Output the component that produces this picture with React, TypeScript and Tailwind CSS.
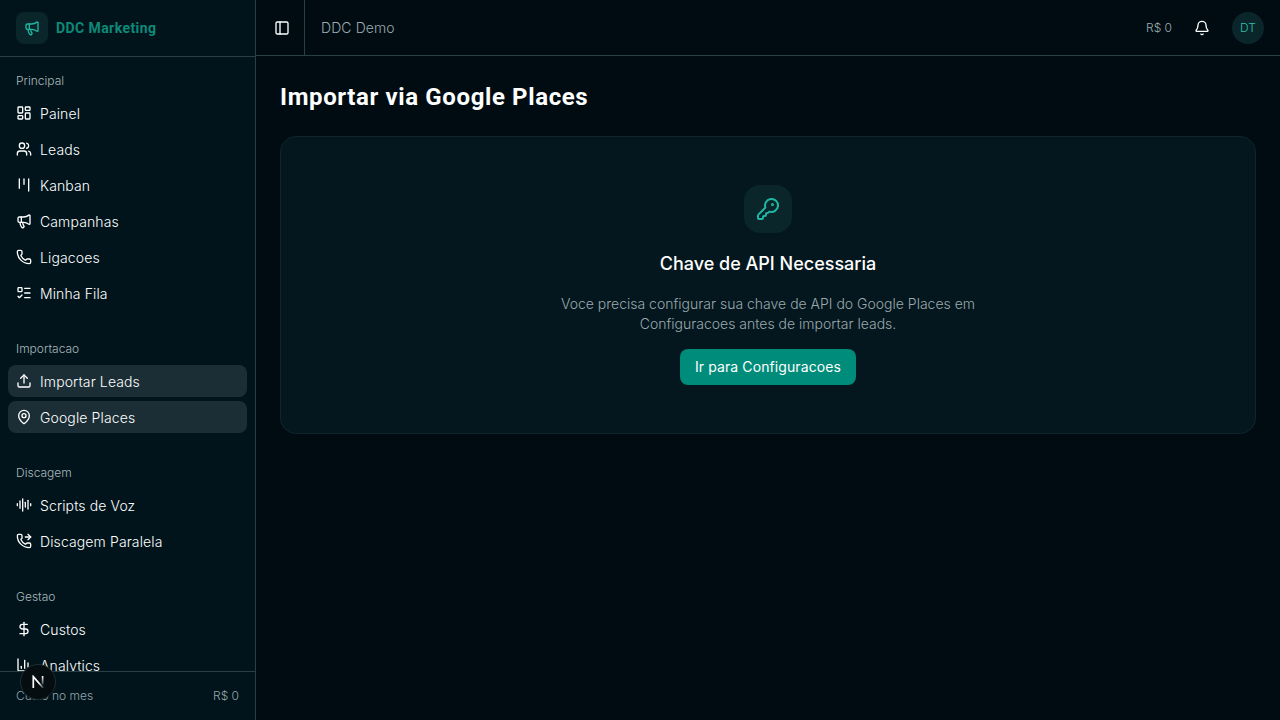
import {
  AudioLines,
  Bell,
  ChartColumn,
  DollarSign,
  Kanban,
  KeyRound,
  LayoutDashboard,
  ListTodo,
  MapPin,
  Megaphone,
  PanelLeft,
  Phone,
  PhoneForwarded,
  Upload,
  Users,
} from "lucide-react";
import type { ComponentType } from "react";

type NavItem = { label: string; icon: ComponentType<{ className?: string }>; active?: boolean };

const groups: { title: string; items: NavItem[] }[] = [
  {
    title: "Principal",
    items: [
      { label: "Painel", icon: LayoutDashboard },
      { label: "Leads", icon: Users },
      { label: "Kanban", icon: Kanban },
      { label: "Campanhas", icon: Megaphone },
      { label: "Ligacoes", icon: Phone },
      { label: "Minha Fila", icon: ListTodo },
    ],
  },
  {
    title: "Importacao",
    items: [
      { label: "Importar Leads", icon: Upload, active: true },
      { label: "Google Places", icon: MapPin, active: true },
    ],
  },
  {
    title: "Discagem",
    items: [
      { label: "Scripts de Voz", icon: AudioLines },
      { label: "Discagem Paralela", icon: PhoneForwarded },
    ],
  },
  {
    title: "Gestao",
    items: [
      { label: "Custos", icon: DollarSign },
      { label: "Analytics", icon: ChartColumn },
    ],
  },
];

const Sidebar = () => {
  return (
    <aside className="w-64 h-full shrink-0 flex flex-col bg-[#01141b] border-r border-[#2b3f46]">
      {/* Logo */}
      <div className="h-[57px] shrink-0 flex items-center gap-2 px-4 border-b border-[#2b3f46]">
        <div className="w-8 h-8 rounded-lg bg-[#0a262b] flex items-center justify-center">
          <Megaphone className="w-4 h-4 text-[#1fb8a4]" />
        </div>
        <span className="text-sm font-bold tracking-[0.42px] text-[#0d8a78] font-['Roboto',sans-serif]">
          DDC Marketing
        </span>
      </div>
      {/* Nav */}
      <nav className="flex-1 min-h-0 overflow-hidden flex flex-col gap-6 p-2">
        {groups.map((group) => (
          <div key={group.title} className="flex flex-col shrink-0">
            <div className="h-8 shrink-0 flex items-center px-2 text-xs text-[#aab8bc]">
              {group.title}
            </div>
            <div className="flex flex-col gap-1">
              {group.items.map((item) => (
                <div
                  key={item.label}
                  className={`h-8 flex items-center gap-2 px-2 rounded-lg text-sm text-white tracking-[0.12px] ${
                    item.active ? "bg-[#1b2e35]" : ""
                  }`}
                >
                  <item.icon className="w-4 h-4 shrink-0" />
                  <span className="pt-px">{item.label}</span>
                </div>
              ))}
            </div>
          </div>
        ))}
      </nav>
      {/* Footer */}
      <div className="h-[49px] shrink-0 flex items-center justify-between px-4 border-t border-[#2b3f46] text-xs text-[#94a4a9]">
        <span>Custo no mes</span>
        <span>R$ 0</span>
      </div>
    </aside>
  );
};

const App = () => {
  return (
    <div className="relative w-full h-screen flex overflow-hidden bg-[#000c12] text-white font-['Inter',sans-serif] font-[350]">
      <Sidebar />
      <div className="flex-1 min-w-0 flex flex-col">
        {/* Top bar */}
        <header className="h-14 shrink-0 flex items-center border-b border-[#2b3f46]">
          <div className="w-[49px] h-full flex items-center pl-[18px] border-r border-[#2b3f46]">
            <PanelLeft className="w-4 h-4 text-white" />
          </div>
          <span className="ml-4 pt-px text-sm text-[#9cabb0] tracking-[0.1px]">DDC Demo</span>
          <div className="ml-auto flex items-center pr-4">
            <span className="text-xs text-[#9cabb0]">R$ 0</span>
            <Bell className="w-4 h-4 ml-[22px] text-white" />
            <div className="w-8 h-8 ml-[22px] rounded-full bg-[#0a262b] flex items-center justify-center text-xs text-[#2dbfa8]">
              DT
            </div>
          </div>
        </header>
        {/* Content */}
        <main className="flex-1 p-6">
          <h1 className="text-2xl font-bold leading-8 pt-px mb-[23px] tracking-[0.62px] font-['Roboto',sans-serif]">
            Importar via Google Places
          </h1>
          <div className="h-[298px] rounded-2xl border border-[#0f242b] bg-[#04171e] flex flex-col items-center pt-12">
            <div className="w-12 h-12 rounded-2xl bg-[#0a262b] flex items-center justify-center">
              <KeyRound className="w-6 h-6 text-[#1fb8a4]" />
            </div>
            <h2 className="mt-[17px] text-lg font-medium leading-7">
              Chave de API Necessaria
            </h2>
            <p className="mt-4 w-[448px] text-sm leading-5 text-center text-[#9aa9ae]">
              Voce precisa configurar sua chave de API do Google Places em Configuracoes antes de
              importar leads.
            </p>
            <button className="mt-[15px] h-9 w-[176px] rounded-lg bg-[#008c7a] text-sm font-normal text-white tracking-[0.1px]">
              Ir para Configuracoes
            </button>
          </div>
        </main>
      </div>
      {/* Dev badge */}
      <div className="absolute left-5 top-[664px] w-9 h-9 rounded-full bg-[#050d11] border border-[#1f2d32] flex items-center justify-center">
        <svg width="14" height="14" viewBox="0 0 14 14" fill="none">
          <defs>
            <linearGradient id="nFade" x1="2" y1="2" x2="12" y2="13" gradientUnits="userSpaceOnUse">
              <stop offset="0.55" stopColor="#fff" />
              <stop offset="1" stopColor="#fff" stopOpacity="0.2" />
            </linearGradient>
            <linearGradient id="nStem" x1="12" y1="1" x2="12" y2="10" gradientUnits="userSpaceOnUse">
              <stop stopColor="#fff" />
              <stop offset="1" stopColor="#fff" stopOpacity="0.2" />
            </linearGradient>
          </defs>
          <path d="M2.3 13V1.6L12.2 13" stroke="url(#nFade)" strokeWidth="1.7" />
          <path d="M11.6 1v8.5" stroke="url(#nStem)" strokeWidth="1.7" />
        </svg>
      </div>
    </div>
  );
};

export default App;
